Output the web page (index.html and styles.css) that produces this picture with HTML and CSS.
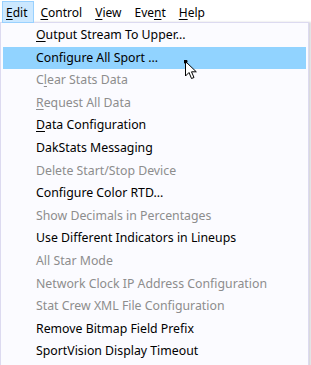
FILE: index.html
```html
<!DOCTYPE html>
<html>
  <head>
    <meta charset="utf-8"/>
    <title>Edit menu</title>
    <link rel="stylesheet" href="styles.css">
  </head>
  <body>
    <div class="menubar">
      <span class="top open"><u>E</u>dit</span>
      <span class="top"><u>C</u>ontrol</span>
      <span class="top"><u>V</u>iew</span>
      <span class="top">Eve<u>n</u>t</span>
      <span class="top"><u>H</u>elp</span>
    </div>
    <div class="drop">
      <div class="item"><u>O</u>utput Stream To Upper...</div>
      <div class="item hot">Configure All Sport ...</div>
      <div class="item off">C<u>l</u>ear Stats Data</div>
      <div class="item off"><u>R</u>equest All Data</div>
      <div class="item"><u>D</u>ata Configuration</div>
      <div class="item">DakStats Messaging</div>
      <div class="item off">Delete Start/Stop Device</div>
      <div class="item">Configure Color RTD...</div>
      <div class="item off">Show Decimals in Percentages</div>
      <div class="item">Use Different Indicators in Lineups</div>
      <div class="item off">All Star Mode</div>
      <div class="item off">Network Clock IP Address Configuration</div>
      <div class="item off">Stat Crew XML File Configuration</div>
      <div class="item">Remove Bitmap Field Prefix</div>
      <div class="item">SportVision Display Timeout</div>
    </div>
    <svg class="cursor" width="16" height="22" viewBox="0 0 16 22">
      <path d="M1.5 1.5 L1.5 16 L5 12.5 L7.5 18.5 L10 17.5 L7.5 11.8 L12.3 11.8 Z" fill="#fff" stroke="#000" stroke-width="1"/>
      <circle cx="1.5" cy="1.5" r="2" fill="#000"/>
    </svg>
  </body>
</html>
```
FILE: styles.css
```css
body{
  margin: 0;
  background: #fcfcff;
  font-family: "Noto Sans", "Open Sans", sans-serif;
  font-size: 12.3px;
  color: #000;
  position: relative;
  overflow: hidden;
}
u{
  text-decoration-thickness: 1px;
  text-underline-offset: 2px;
}
.menubar{
  display: flex;
  height: 22px;
  padding-left: 2px;
  background: #fff;
  font-size: 12px;
}
.top{
  display: flex;
  align-items: center;
  padding: 0 5px 0 3px;
  margin-right: 3px;
  border: 1px solid transparent;
  height: 20px;
  margin-top: 1px;
}
.top.open{
  background: #cce8ff;
  border-color: #99d1ff;
}
.drop{
  width: 307px;
  height: 345px;
  background: #fbfbff;
  border: 1px solid #dcdaf0;
  border-bottom: 0;
  padding-top: 1px;
  box-shadow: 2px 0 2px rgba(0,0,0,0.15);
}
.item{
  height: 22.6px;
  line-height: 22.6px;
  padding-left: 33px;
  margin: 0 2px;
  white-space: nowrap;
}
.item.hot{
  background: #91d3ff;
}
.item.off{
  color: #8d8d8d;
}
.cursor{
  position: absolute;
  left: 184px;
  top: 60px;
}
```
